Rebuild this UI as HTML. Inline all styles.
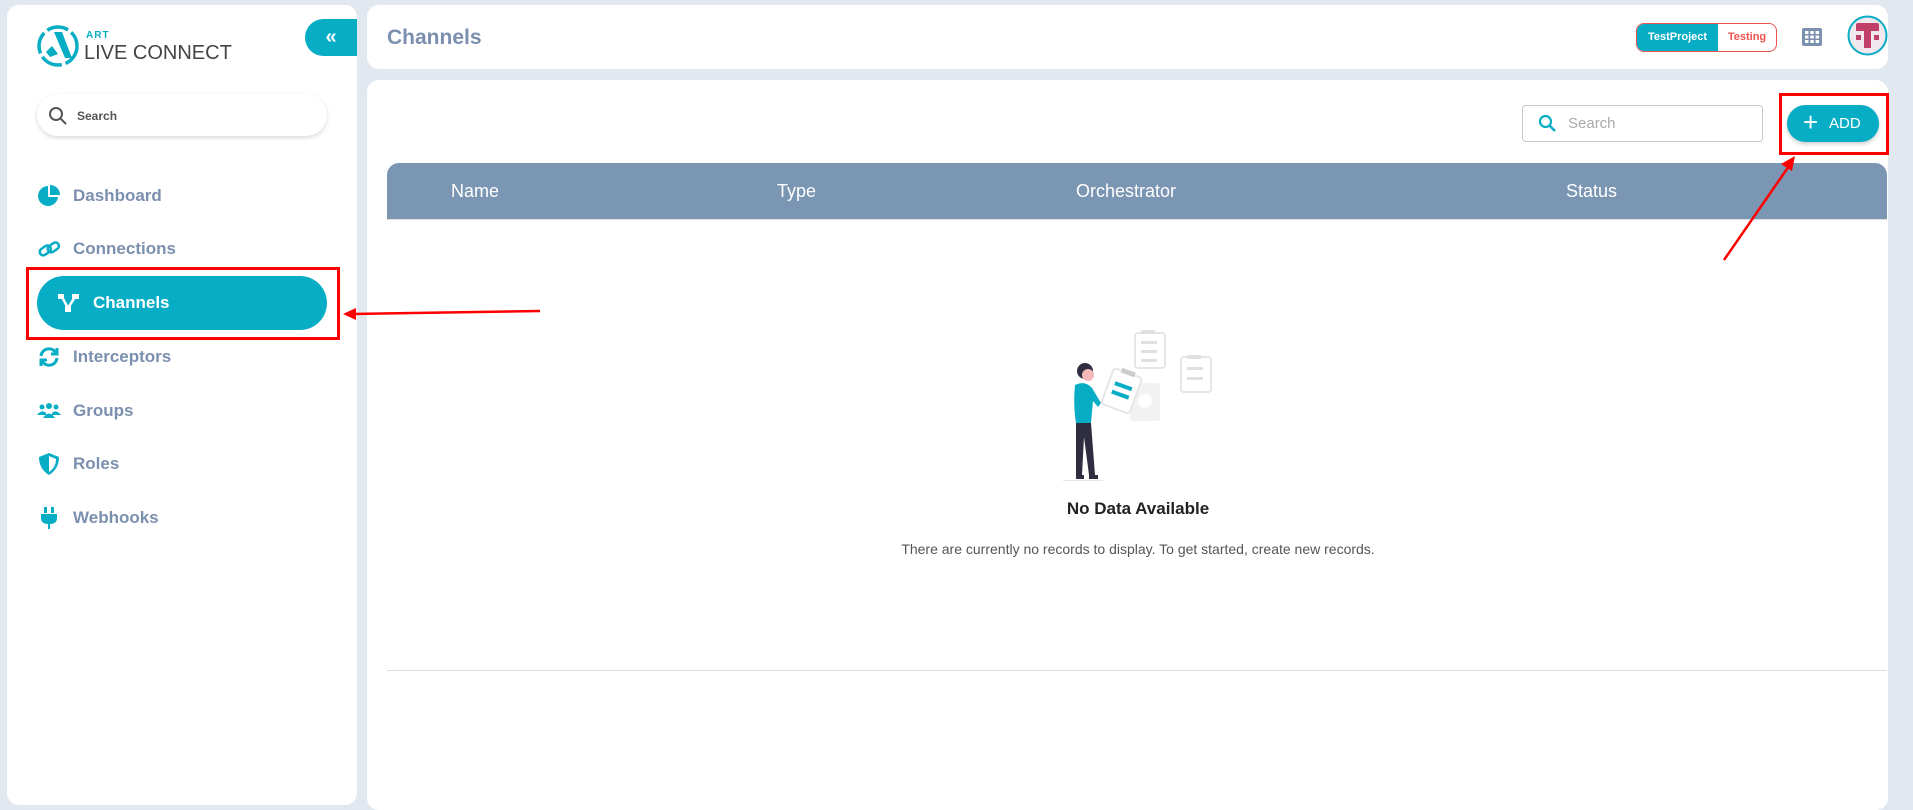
<!DOCTYPE html>
<html><head><meta charset="utf-8"><style>
*{box-sizing:border-box;margin:0;padding:0}
body{width:1913px;height:794px;background:#e2e8f0;font-family:"Liberation Sans",sans-serif;position:relative;overflow:hidden}
.abs{position:absolute}
.side{left:7px;top:5px;width:350px;height:800px;background:#fff;border-radius:12px}
.nav{position:absolute;left:37px;font-size:17px;font-weight:bold;color:#7b8fae;display:flex;align-items:center;gap:12px}
.nav svg{width:24px;height:24px}
</style></head><body>
<div class="abs side"></div>
<svg class="abs" style="left:36px;top:24px" width="46" height="44" viewBox="0 0 46 44"><circle cx="22" cy="22" r="19" fill="none" stroke="#07adc5" stroke-width="3.5" stroke-dasharray="22 4"/><path d="M18 8 L26 8 L36 34 L29 34 Z" fill="#07adc5"/><path d="M10 28 L16 22 L22 30 L14 33 Z" fill="#07adc5"/></svg>
<div class="abs" style="left:86px;top:30px;font-size:10px;font-weight:bold;color:#07adc5;letter-spacing:1px">ART</div>
<div class="abs" style="left:84px;top:42px;font-size:20px;color:#444">LIVE CONNECT</div>
<div class="abs" style="left:305px;top:19px;width:52px;height:37px;background:#07adc5;border-radius:19px 0 0 19px;color:#fff;font-size:20px;text-align:center;line-height:37px;font-weight:bold">«</div>
<div class="abs" style="left:37px;top:94px;width:290px;height:42px;border-radius:21px;background:#fff;box-shadow:0 2px 5px rgba(0,0,0,.15)"></div>
<svg class="abs" style="left:48px;top:106px" width="20" height="20" viewBox="0 0 20 20"><circle cx="8" cy="8" r="6" fill="none" stroke="#555" stroke-width="2"/><path d="M12.5 12.5 L18 18" stroke="#555" stroke-width="2"/></svg>
<div class="abs" style="left:77px;top:109px;font-size:12px;font-weight:bold;color:#555">Search</div>
<div class="nav" style="top:184px"><svg viewBox="0 0 24 24"><path d="M11 2 A10 10 0 1 0 21 13 L11 13 Z" fill="#07adc5"/><path d="M13 1 A10 10 0 0 1 23 11 L13 11Z" fill="#07adc5"/></svg><span>Dashboard</span></div>
<div class="nav" style="top:237px"><svg viewBox="0 0 24 24"><g fill="none" stroke="#07adc5" stroke-width="2.5"><rect x="2" y="10" width="12" height="7" rx="3.5" transform="rotate(-35 8 13)"/><rect x="10" y="7" width="12" height="7" rx="3.5" transform="rotate(-35 16 10)"/></g></svg><span>Connections</span></div>
<div class="abs" style="left:37px;top:276px;width:290px;height:54px;border-radius:27px;background:#07adc5"></div>
<div class="nav" style="top:291px;left:57px;color:#fff"><svg viewBox="0 0 24 24" fill="#fff"><rect x="1" y="3" width="6" height="5"/><rect x="15" y="3" width="7" height="5"/><rect x="8" y="15" width="6" height="6"/><path d="M5 6 L11 17 L18 6" stroke="#fff" stroke-width="2.5" fill="none"/></svg><span>Channels</span></div>
<div class="nav" style="top:345px"><svg viewBox="0 0 24 24" fill="none" stroke="#07adc5" stroke-width="3"><path d="M4 11 A8 8 0 0 1 19 8"/><path d="M20 13 A8 8 0 0 1 5 16"/><path d="M20 3 L20 9 L14 9" /><path d="M4 21 L4 15 L10 15"/></svg><span>Interceptors</span></div>
<div class="nav" style="top:399px"><svg viewBox="0 0 24 24" fill="#07adc5"><circle cx="5" cy="8" r="2.5"/><circle cx="12" cy="7" r="3"/><circle cx="19" cy="8" r="2.5"/><path d="M0 16 Q5 10 9 14 L9 16Z M6 19 Q12 10 18 19Z M15 14 Q19 10 24 16 L15 16Z"/></svg><span>Groups</span></div>
<div class="nav" style="top:452px"><svg viewBox="0 0 24 24"><path d="M12 1 L22 5 Q22 17 12 23 Q2 17 2 5 Z" fill="#07adc5"/><path d="M12 4 L19 7 Q19 15 12 20 Z" fill="#fff"/></svg><span>Roles</span></div>
<div class="nav" style="top:506px"><svg viewBox="0 0 24 24" fill="#07adc5"><rect x="7" y="1" width="3" height="6"/><rect x="14" y="1" width="3" height="6"/><path d="M4 8 L20 8 L20 12 Q20 18 13 18 L13 23 L11 23 L11 18 Q4 18 4 12Z"/></svg><span>Webhooks</span></div>
<div class="abs" style="left:26px;top:267px;width:314px;height:73px;border:3px solid #f00"></div>
<div class="abs" style="left:367px;top:5px;width:1521px;height:64px;background:#fff;border-radius:12px"></div>
<div class="abs" style="left:387px;top:26px;font-size:21px;font-weight:bold;color:#7b8fae">Channels</div>
<div class="abs" style="left:1636px;top:23px;width:141px;height:29px;border:1px solid #ef5350;border-radius:8px;overflow:hidden;display:flex;font-size:11px;font-weight:bold">
<div style="width:81px;background:#07adc5;color:#fff;text-align:center;line-height:27px">TestProject</div><div style="flex:1;color:#ef5350;text-align:center;line-height:27px">Testing</div></div>
<svg class="abs" style="left:1802px;top:28px" width="20" height="18" viewBox="0 0 20 18"><rect width="20" height="18" rx="2" fill="#7b8fae"/><g fill="#fff"><rect x="3" y="3" width="3.5" height="3"/><rect x="8.3" y="3" width="3.5" height="3"/><rect x="13.6" y="3" width="3.5" height="3"/><rect x="3" y="7.5" width="3.5" height="3"/><rect x="8.3" y="7.5" width="3.5" height="3"/><rect x="13.6" y="7.5" width="3.5" height="3"/><rect x="3" y="12" width="3.5" height="3"/><rect x="8.3" y="12" width="3.5" height="3"/><rect x="13.6" y="12" width="3.5" height="3"/></g></svg>
<svg class="abs" style="left:1847px;top:15px" width="41" height="41" viewBox="0 0 41 41"><circle cx="20.5" cy="20.5" r="19" fill="#f0e8ec" stroke="#07adc5" stroke-width="2"/><path d="M9 10 Q9 8 11 8 L30 8 Q32 8 32 10 L32 16 L9 16Z" fill="#c0406a"/><rect x="17" y="16" width="7" height="17" fill="#c0406a"/><rect x="9" y="20" width="5" height="5" fill="#c0406a"/><rect x="27" y="20" width="5" height="5" fill="#c0406a"/></svg>
<div class="abs" style="left:367px;top:80px;width:1521px;height:730px;background:#fff;border-radius:12px"></div>
<div class="abs" style="left:1522px;top:105px;width:241px;height:37px;border:1px solid #c8c8c8;border-radius:4px"></div>
<svg class="abs" style="left:1538px;top:114px" width="19" height="19" viewBox="0 0 19 19"><circle cx="7.5" cy="7.5" r="5.5" fill="none" stroke="#07adc5" stroke-width="2.2"/><path d="M11.5 11.5 L17 17" stroke="#07adc5" stroke-width="2.5"/></svg>
<div class="abs" style="left:1568px;top:115px;font-size:15px;color:#aaa">Search</div>
<div class="abs" style="left:1787px;top:105px;width:92px;height:37px;border-radius:19px;background:#07adc5;color:#fff;font-size:15px;line-height:37px;box-shadow:0 2px 4px rgba(0,0,0,.2)"><span style="position:absolute;left:16px;top:-1px;font-size:26px;font-weight:300">+</span><span style="position:absolute;left:42px">ADD</span></div>
<div class="abs" style="left:1779px;top:93px;width:110px;height:62px;border:3px solid #f00"></div>
<div class="abs" style="left:387px;top:163px;width:1500px;height:57px;background:#7b96b3;border-radius:12px 12px 0 0;color:#fff;font-size:18px">
<span class="abs" style="left:64px;top:18px">Name</span><span class="abs" style="left:390px;top:18px">Type</span><span class="abs" style="left:689px;top:18px">Orchestrator</span><span class="abs" style="left:1179px;top:18px">Status</span></div>
<div class="abs" style="left:387px;top:219px;width:1500px;height:1px;background:#ddd"></div>
<svg class="abs" style="left:1715px;top:150px" width="90" height="115"><path d="M9 110 L74 16" stroke="#f00" stroke-width="2.5"/><path d="M80 6 L66 14 L77 21 Z" fill="#f00"/></svg>
<svg class="abs" style="left:1055px;top:325px" width="170" height="160" viewBox="0 0 170 160">
<g fill="none" stroke="#e6e6e6" stroke-width="2"><rect x="80" y="8" width="30" height="35" rx="3"/><rect x="126" y="32" width="30" height="35" rx="3"/></g>
<g fill="#e0e0e0"><rect x="86" y="5" width="14" height="4"/><rect x="132" y="30" width="14" height="4"/><rect x="86" y="16" width="16" height="3"/><rect x="86" y="25" width="16" height="3"/><rect x="86" y="34" width="16" height="3"/><rect x="132" y="42" width="16" height="3"/><rect x="132" y="52" width="16" height="3"/></g>
<rect x="75" y="58" width="30" height="38" rx="3" fill="#f2f2f2"/><circle cx="90" cy="76" r="7" fill="#fff"/>
<g transform="rotate(20 120 80)"><rect x="50" y="66" width="30" height="38" rx="3" fill="#fff" stroke="#e6e6e6" stroke-width="2"/><rect x="58" y="63" width="14" height="5" fill="#ccc"/><rect x="56" y="78" width="18" height="4" fill="#07adc5"/><rect x="56" y="87" width="18" height="4" fill="#07adc5"/></g>
<circle cx="30" cy="46" r="8" fill="#2f2e41"/><circle cx="33" cy="50" r="6" fill="#f5b8b8"/>
<path d="M20 60 Q30 55 37 63 L46 78 L43 82 L38 76 L36 98 L21 98 Q18 80 20 60Z" fill="#07adc5"/>
<path d="M21 98 L36 98 L40 150 L34 150 L29 112 L27 150 L21 150Z" fill="#2f2e41"/>
<rect x="21" y="150" width="8" height="4" fill="#2f2e41"/><rect x="34" y="150" width="9" height="4" fill="#2f2e41"/>
<rect x="8" y="155" width="40" height="1" fill="#e6e6e6"/>
</svg>
<div class="abs" style="left:0;width:2276px;top:499px;text-align:center;font-size:17px;font-weight:bold;color:#222">No Data Available</div>
<div class="abs" style="left:0;width:2276px;top:541px;text-align:center;font-size:14px;color:#555">There are currently no records to display. To get started, create new records.</div>
<div class="abs" style="left:387px;top:670px;width:1500px;height:1px;background:#ddd"></div>
<svg class="abs" style="left:340px;top:300px" width="210" height="25"><path d="M200 11 L12 14" stroke="#f00" stroke-width="2.5"/><path d="M3 14 L16 8 L16 20 Z" fill="#f00"/></svg>
</body></html>
